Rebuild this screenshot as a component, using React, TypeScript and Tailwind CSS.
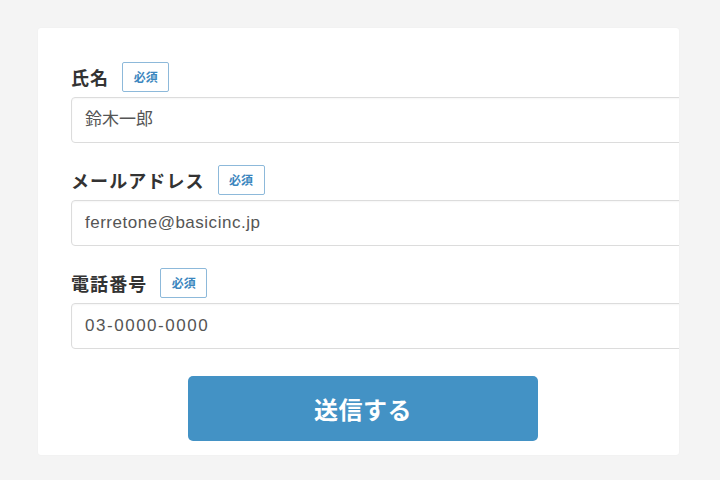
const fields = [
  { label: "氏名", value: "鈴木一郎", track: "" },
  { label: "メールアドレス", value: "ferretone@basicinc.jp", track: "tracking-[0.03em]" },
  { label: "電話番号", value: "03-0000-0000", track: "tracking-[0.09em]" },
];

const jp = "font-['Noto_Sans_CJK_JP','Noto_Sans',sans-serif]";

function Field({ label, value, track }: { label: string; value: string; track: string }) {
  return (
    <div className="flex flex-col gap-[5px]">
      <div className="flex items-center gap-[13px]">
        <span className={`${jp} text-[18px] font-bold leading-none tracking-[0.06em] text-[#333]`}>
          {label}
        </span>
        <span
          className={`${jp} flex h-[30px] w-[47px] items-center justify-center rounded-[2px] border-[1.5px] border-[#8db9da] bg-white text-[12px] font-bold text-[#3b86be]`}
        >
          必須
        </span>
      </div>
      <div className="flex h-[46px] w-[640px] items-center rounded-[4px] border border-[#dcdcdc] bg-white px-[13px] shadow-[inset_0_1px_2px_rgba(0,0,0,0.04)]">
        <span className={`font-['Liberation_Sans','Noto_Sans_CJK_JP',sans-serif] text-[17px] text-[#555] ${track}`}>
          {value}
        </span>
      </div>
    </div>
  );
}

export default function App() {
  return (
    <div className="h-[480px] w-[720px] bg-[#f4f4f4] pt-[28px] pl-[38px]">
      <div className="h-[427px] w-[641px] overflow-hidden rounded-[3px] bg-white pt-[34px] pl-[33px] shadow-[0_0_2px_rgba(0,0,0,0.04)]">
        <div className="flex flex-col gap-[22px]">
          {fields.map((f) => (
            <Field key={f.label} {...f} />
          ))}
        </div>
        <button
          className={`${jp} mt-[27px] ml-[117px] flex h-[65px] w-[350px] items-center justify-center rounded-[5px] bg-[#4392c5] text-[24px] font-bold tracking-[0.02em] text-white`}
        >
          送信する
        </button>
      </div>
    </div>
  );
}
